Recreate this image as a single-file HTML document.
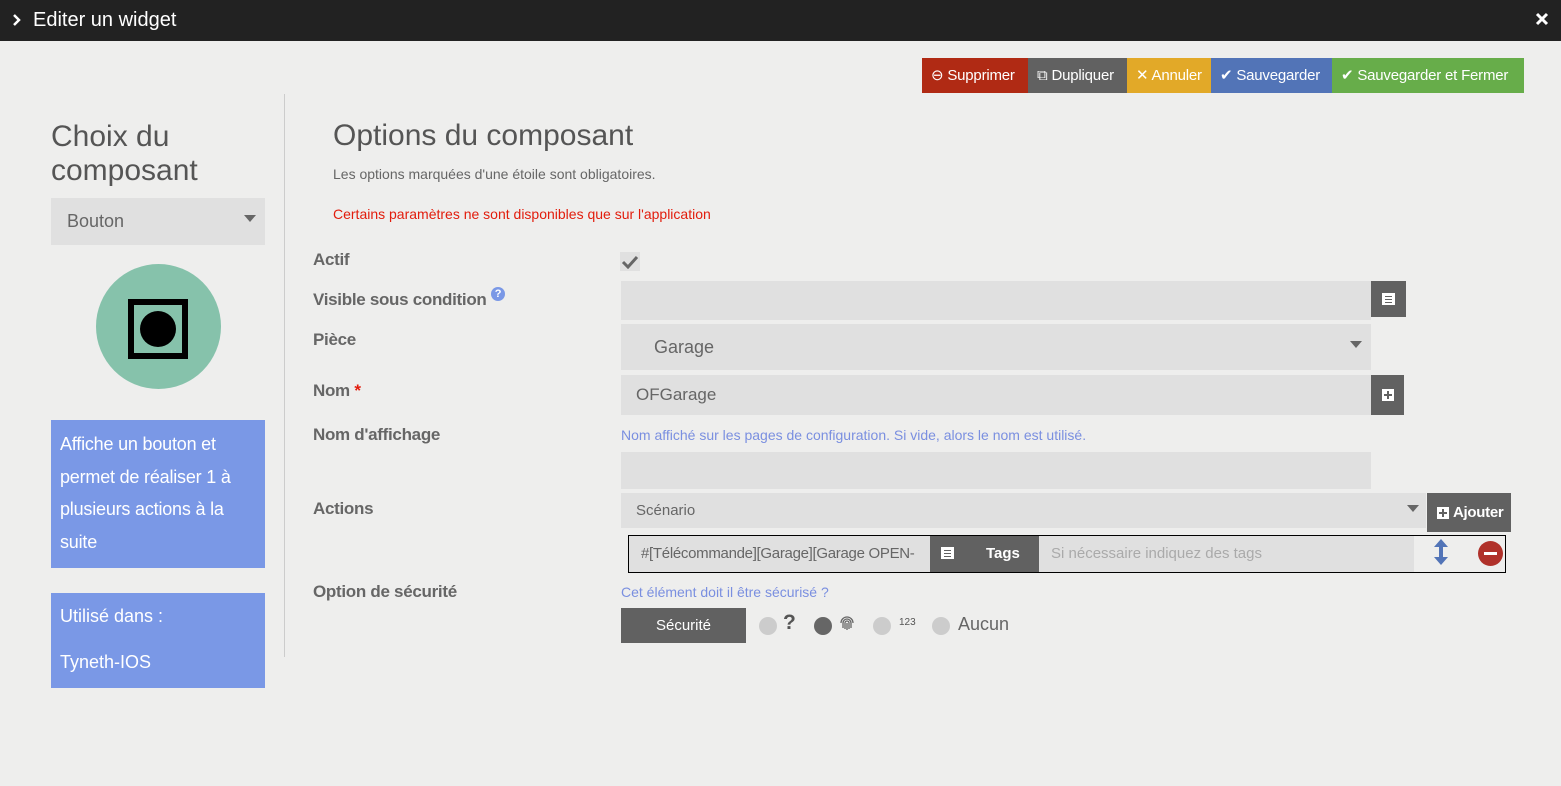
<!DOCTYPE html>
<html><head><meta charset="utf-8"><style>
*{box-sizing:border-box;margin:0;padding:0}
body{width:1561px;height:786px;background:#eeeeed;font-family:"Liberation Sans",sans-serif;color:#666;position:relative;overflow:hidden}
.a{position:absolute}
.hdr{left:0;top:0;width:1561px;height:41px;background:#222}
.btn{top:58px;height:35px;color:#fff;font-size:15px;line-height:35px;padding-left:9px;white-space:nowrap;letter-spacing:-0.2px}
.lbl{left:313px;font-size:17px;font-weight:bold;color:#666;letter-spacing:-0.3px}
.inp{background:#e0e0e0}
.dk{background:#616161;color:#fff}
.rad{width:18px;height:18px;border-radius:50%;background:#ccc}
</style></head><body>
<div class="a hdr"></div>
<svg class="a" style="left:12px;top:14px" width="10" height="12"><path d="M2 1l5 5-5 5" stroke="#fff" stroke-width="2.5" fill="none"/></svg>
<div class="a" style="left:33px;top:9px;color:#fff;font-size:20px">Editer un widget</div>
<svg class="a" style="left:1535px;top:12px" width="14" height="14"><path d="M2 2l10 10M12 2L2 12" stroke="#fff" stroke-width="3"/></svg>

<div class="a btn" style="left:922px;width:106px;background:#b02a14">⊖ Supprimer</div>
<div class="a btn" style="left:1028px;width:99px;background:#616161">⧉ Dupliquer</div>
<div class="a btn" style="left:1127px;width:84px;background:#e2a928">✕ Annuler</div>
<div class="a btn" style="left:1211px;width:121px;background:#5274b7">✔ Sauvegarder</div>
<div class="a btn" style="left:1332px;width:192px;background:#67ad4a">✔ Sauvegarder et Fermer</div>

<div class="a" style="left:284px;top:94px;width:1px;height:563px;background:#ccc"></div>
<div class="a" style="left:51px;top:120px;font-size:30px;line-height:34px;color:#555">Choix du<br>composant</div>
<div class="a inp" style="left:51px;top:198px;width:214px;height:47px;font-size:18px;line-height:47px;padding-left:16px;color:#666">Bouton</div>
<div class="a" style="left:244px;top:215px;border:6px solid transparent;border-top:7px solid #666"></div>
<div class="a" style="left:96px;top:264px;width:125px;height:125px;border-radius:50%;background:#86c2ab"></div>
<div class="a" style="left:128px;top:299px;width:60px;height:60px;border:6px solid #000"></div>
<div class="a" style="left:140px;top:311px;width:36px;height:36px;border-radius:50%;background:#000"></div>
<div class="a" style="left:51px;top:420px;width:214px;height:148px;background:#7a98e6;color:#fff;font-size:18px;line-height:32.5px;padding:8px 9px;letter-spacing:-0.2px">Affiche un bouton et permet de réaliser 1 à plusieurs actions à la suite</div>
<div class="a" style="left:51px;top:593px;width:214px;height:95px;background:#7a98e6;color:#fff;font-size:18px;padding:12px 9px;line-height:23px">Utilisé dans :<br><br>Tyneth-IOS</div>

<div class="a" style="left:333px;top:119px;font-size:30px;color:#555">Options du composant</div>
<div class="a" style="left:333px;top:166px;font-size:14px;color:#666">Les options marquées d'une étoile sont obligatoires.</div>
<div class="a" style="left:333px;top:206px;font-size:14px;color:#e21c0c">Certains paramètres ne sont disponibles que sur l'application</div>

<div class="a lbl" style="top:250px">Actif</div>
<div class="a lbl" style="top:287px">Visible sous condition <span style="display:inline-block;width:14px;height:14px;border-radius:50%;background:#7a98e6;color:#fff;font-size:11px;text-align:center;line-height:14px;vertical-align:8px">?</span></div>
<div class="a lbl" style="top:330px">Pièce</div>
<div class="a lbl" style="top:381px">Nom <span style="color:#e21c0c">*</span></div>
<div class="a lbl" style="top:425px">Nom d'affichage</div>
<div class="a lbl" style="top:499px">Actions</div>
<div class="a lbl" style="top:582px">Option de sécurité</div>

<div class="a inp" style="left:620px;top:252px;width:20px;height:19px"></div>
<svg class="a" style="left:621px;top:254px" width="18" height="15"><path d="M2 8l5 5 9-10" stroke="#666" stroke-width="3" fill="none"/></svg>
<div class="a inp" style="left:621px;top:281px;width:750px;height:39px"></div>
<div class="a dk" style="left:1371px;top:281px;width:35px;height:36px"></div>
<div class="a" style="left:1382px;top:293px;width:13px;height:12px;background:#fff"></div>
<div class="a" style="left:1385px;top:296px;width:7px;height:1px;background:#616161;box-shadow:0 3px #616161,0 6px #616161"></div>
<div class="a inp" style="left:621px;top:324px;width:750px;height:46px;font-size:18px;line-height:46px;padding-left:33px">Garage</div>
<div class="a" style="left:1350px;top:341px;border:6px solid transparent;border-top:7px solid #666"></div>
<div class="a inp" style="left:621px;top:375px;width:750px;height:40px;font-size:17px;line-height:40px;padding-left:15px">OFGarage</div>
<div class="a dk" style="left:1371px;top:375px;width:33px;height:40px"></div>
<div class="a" style="left:1382px;top:389px;width:12px;height:12px;background:#fff"></div>
<div class="a" style="left:1384px;top:394px;width:8px;height:2px;background:#616161"></div>
<div class="a" style="left:1387px;top:391px;width:2px;height:8px;background:#616161"></div>
<div class="a" style="left:621px;top:427px;font-size:14px;color:#7a8fe0">Nom affiché sur les pages de configuration. Si vide, alors le nom est utilisé.</div>
<div class="a inp" style="left:621px;top:452px;width:750px;height:37px"></div>
<div class="a inp" style="left:621px;top:493px;width:805px;height:35px;font-size:15px;line-height:35px;padding-left:15px">Scénario</div>
<div class="a" style="left:1407px;top:505px;border:6px solid transparent;border-top:7px solid #666"></div>
<div class="a dk" style="left:1427px;top:493px;width:84px;height:39px;font-size:15px;line-height:39px;font-weight:bold;padding-left:26px;letter-spacing:-0.3px">Ajouter</div>
<div class="a" style="left:1437px;top:507px;width:12px;height:12px;background:#fff"></div>
<div class="a" style="left:1439px;top:512px;width:8px;height:2px;background:#616161"></div>
<div class="a" style="left:1442px;top:509px;width:2px;height:8px;background:#616161"></div>
<div class="a" style="left:628px;top:535px;width:878px;height:38px;border:1px solid #000"></div>
<div class="a inp" style="left:629px;top:536px;width:302px;height:36px;font-size:15px;line-height:36px;padding-left:12px;white-space:nowrap;overflow:hidden;letter-spacing:-0.3px">#[Télécommande][Garage][Garage OPEN-</div>
<div class="a dk" style="left:930px;top:536px;width:109px;height:36px;font-size:15px;line-height:36px"><span style="margin-left:56px;font-weight:bold">Tags</span></div>
<div class="a" style="left:941px;top:547px;width:13px;height:12px;background:#fff"></div>
<div class="a" style="left:944px;top:550px;width:7px;height:1px;background:#616161;box-shadow:0 3px #616161,0 6px #616161"></div>
<div class="a inp" style="left:1039px;top:536px;width:375px;height:36px;font-size:15px;line-height:36px;padding-left:12px;color:#aaa">Si nécessaire indiquez des tags</div>
<svg class="a" style="left:1433px;top:539px" width="16" height="26"><path d="M8 0L15 8H10V18H15L8 26L1 18H6V8H1Z" fill="#5274b7"/></svg>
<div class="a" style="left:1478px;top:541px;width:25px;height:25px;border-radius:50%;background:#b0312a"></div>
<div class="a" style="left:1484px;top:552px;width:13px;height:3px;background:#fff"></div>

<div class="a" style="left:621px;top:584px;font-size:14px;color:#7a8fe0">Cet élément doit il être sécurisé ?</div>
<div class="a dk" style="left:621px;top:608px;width:125px;height:35px;text-align:center;line-height:35px;font-size:15px">Sécurité</div>
<div class="a rad" style="left:759px;top:617px"></div>
<div class="a" style="left:783px;top:611px;font-size:21px;font-weight:bold;color:#555">?</div>
<div class="a rad" style="left:814px;top:617px;background:#666"></div>
<svg class="a" style="left:838px;top:614px" width="18" height="18"><path d="M3 9a6 6 0 0 1 12 0M5 14V9a4 4 0 0 1 8 0v5M7 15V9a2 2 0 0 1 4 0v6M9 9v7" stroke="#666" stroke-width="1.3" fill="none"/></svg>
<div class="a rad" style="left:873px;top:617px"></div>
<div class="a" style="left:899px;top:617px;font-size:10px;color:#555">123</div>
<div class="a rad" style="left:932px;top:617px"></div>
<div class="a" style="left:958px;top:614px;font-size:18px;color:#666">Aucun</div>
</body></html>
